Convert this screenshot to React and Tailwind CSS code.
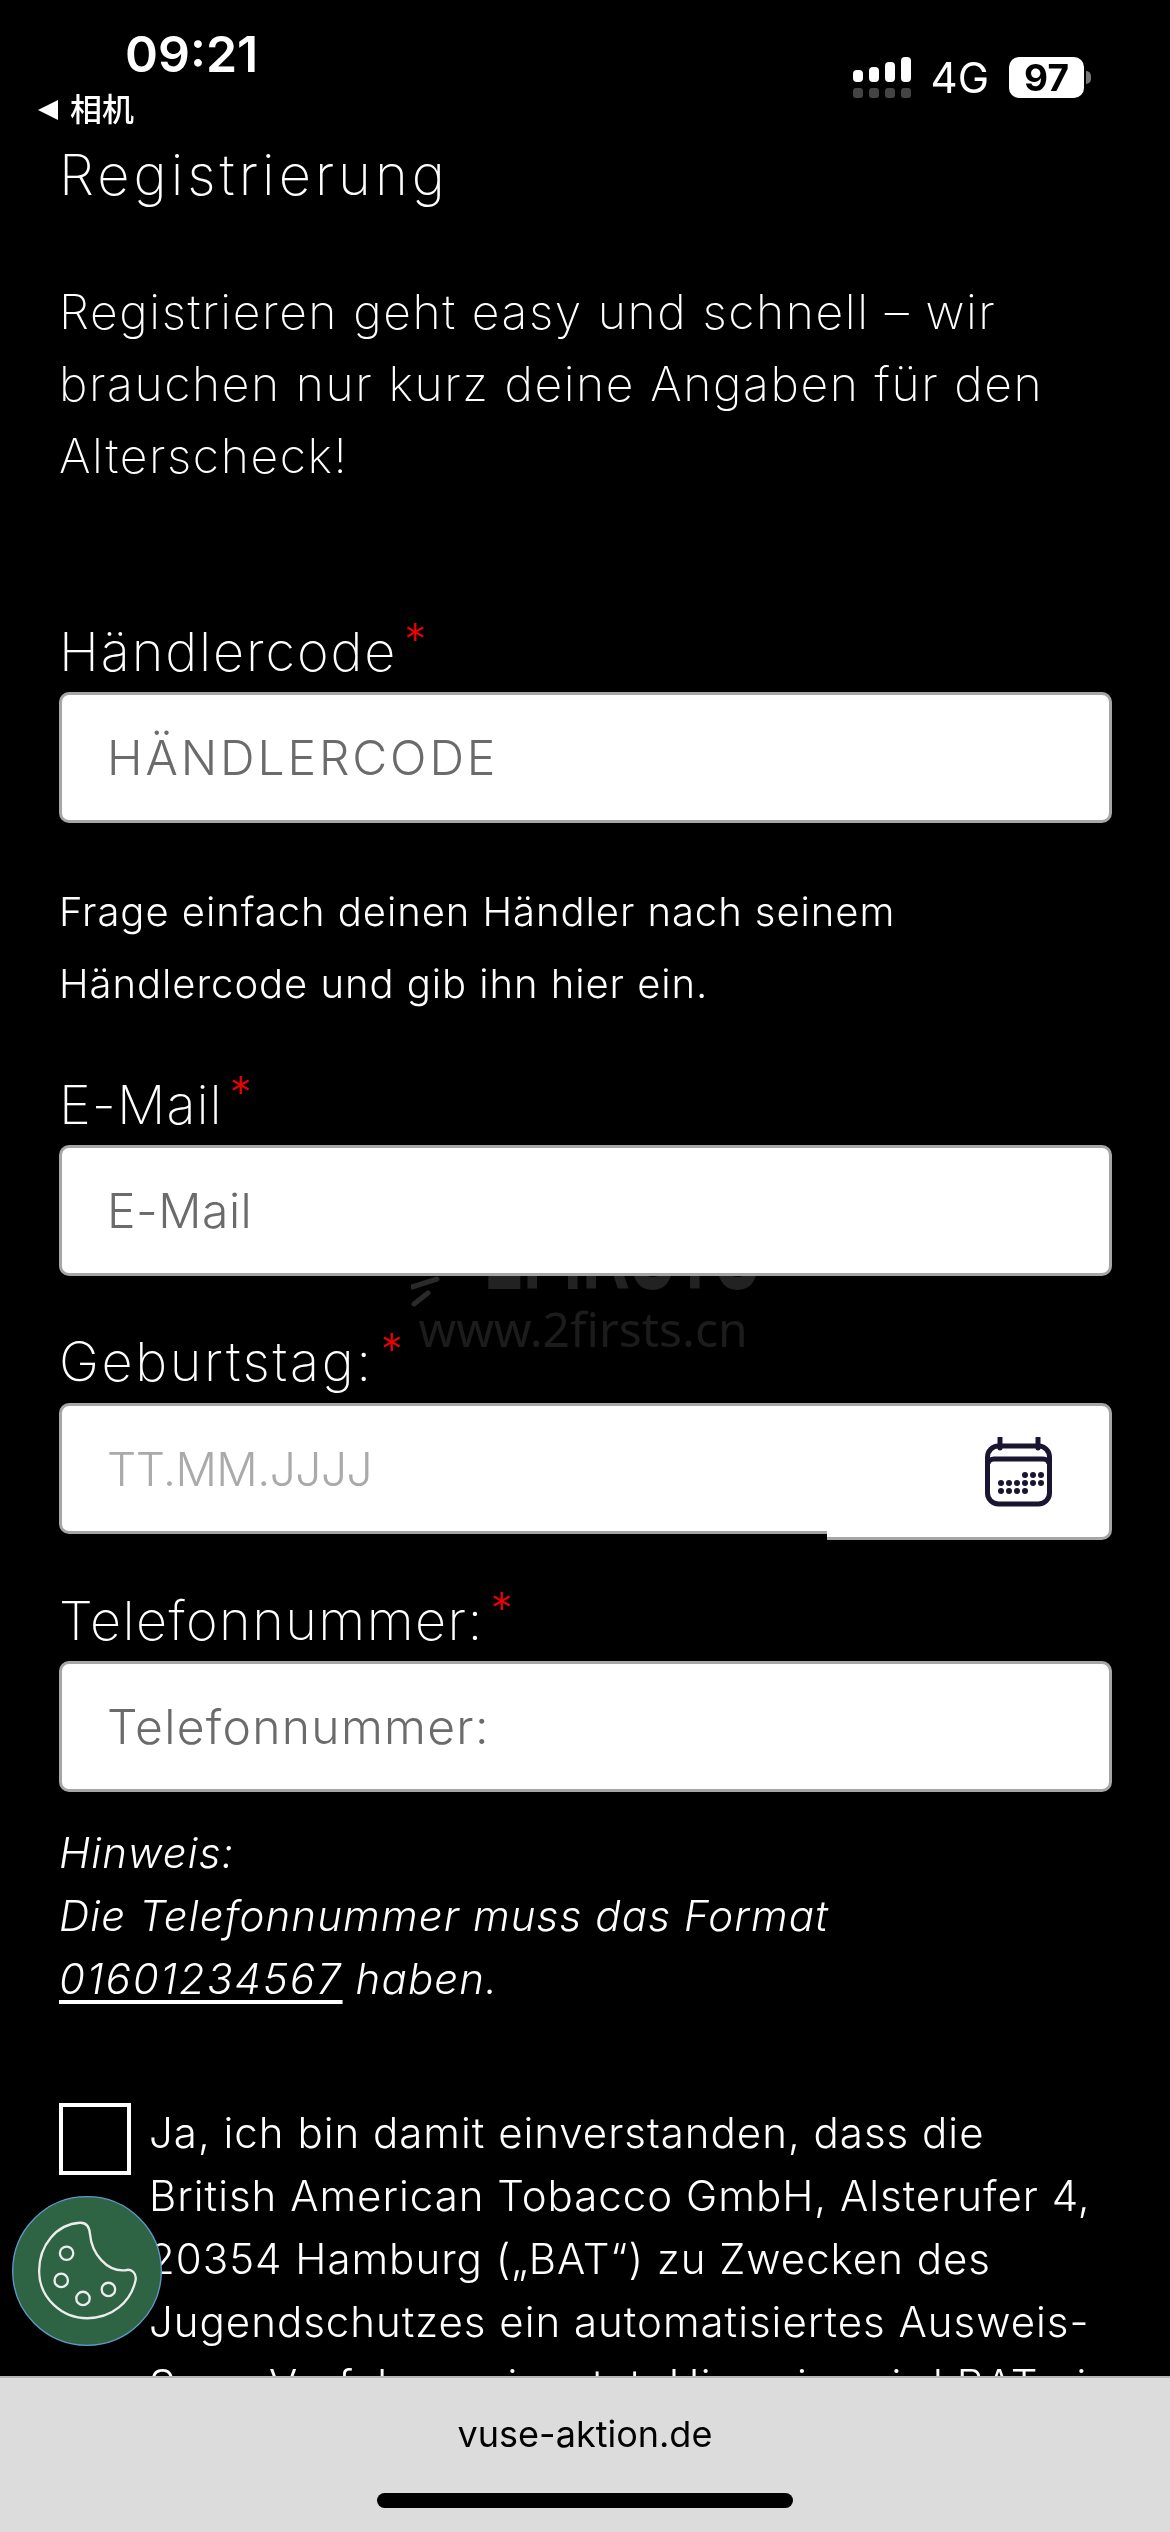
import React from "react";

const Star = () => <span className="absolute text-[#f00000] text-[44px] leading-none font-light left-full top-[-3px] ml-[7px]">*</span>;

function Label({ children, className = "" }) {
  return (
    <label className={`block h-[64px] text-[54px] leading-[64px] font-[250] text-white ${className}`}>
      <span className="relative inline-block">{children}<Star /></span>
    </label>
  );
}

function Field({ placeholder, className = "" }) {
  return (
    <input
      readOnly
      placeholder={placeholder}
      className={`block w-full h-[131px] bg-white border-[3px] border-[#a6a6a6] rounded-[10px] pl-[45px] pr-4 text-[48px] font-light outline-none placeholder:text-[#6b6b6b] ${className}`}
    />
  );
}

function Signal() {
  const heights = ["h-[12px]", "h-[15px]", "h-[20px]", "h-[25px]"];
  return (
    <div className="flex flex-col gap-[6px]">
      <div className="flex items-end gap-[6px] h-[25px]">
        {heights.map((h) => <span key={h} className={`w-[10px] ${h} rounded-[4px] bg-white`} />)}
      </div>
      <div className="flex gap-[6px]">
        {heights.map((h) => <span key={h} className="w-[10px] h-[10px] rounded-[3px] bg-[#444444]" />)}
      </div>
    </div>
  );
}

function CalendarIcon() {
  const dots = [
    [46, 32], [54, 32], [62, 32],
    [22, 40], [30, 40], [38, 40], [46, 40], [54, 40], [62, 40],
    [22, 48], [30, 48], [38, 48], [46, 48],
  ];
  return (
    <svg width="70" height="70" viewBox="0 0 70 70" fill="none" className="block">
      <path d="M16 1v10M54 1v10" stroke="#1a1530" strokeWidth="5" strokeLinecap="round" />
      <rect x="3.5" y="9" width="62" height="58" rx="11" stroke="#1a1530" strokeWidth="5" />
      <path d="M4 27c0-3 3-5 6-5h49c3 0 6 2 6 5" stroke="#1a1530" strokeWidth="5" />
      {dots.map(([x, y]) => <circle key={`${x}-${y}`} cx={x - 5} cy={y + 6} r="3" fill="#1a1530" />)}
    </svg>
  );
}

function CookieIcon() {
  return (
    <svg viewBox="37 348 448 448" className="block w-full h-full">
      <circle cx="261" cy="572" r="222" fill="#2e6344" stroke="#5b9bc9" strokeWidth="4" />
      <g fill="none" stroke="#ececec" strokeWidth="7">
        <path d="M240 428C170 432 118 495 118 572C118 652 185 713 262 713C335 713 392 665 406 600C410 580 395 563 375 570C320 575 275 520 270 462C268 440 258 427 240 428Z" />
        <circle cx="200" cy="519" r="20" />
        <circle cx="184" cy="600" r="20" />
        <circle cx="249" cy="654" r="20" />
        <circle cx="325" cy="627" r="20" />
      </g>
    </svg>
  );
}

export default function App() {
  return (
    <div
      className="relative w-[1170px] h-[2532px] overflow-hidden bg-black text-white flex flex-col"
      style={{ fontFamily: 'Inter, "Noto Sans CJK SC", sans-serif' }}
    >
      <main className="flex-1 min-h-0 overflow-hidden flex flex-col">
        <header className="h-[143px] shrink-0 flex justify-between pl-[38px] pr-[79px]">
          <div className="flex flex-col pt-[27px]">
            <span className="ml-[87px] text-[50px] leading-[54px] font-semibold">09:21</span>
            <span className="flex items-center gap-[12px] mt-[11px] text-[32px] leading-[36px] font-medium">
              <span className="w-0 h-0 border-y-[10px] border-y-transparent border-r-[20px] border-r-white" />
              相机
            </span>
          </div>
          <div className="flex items-start gap-[20px] pt-[57px]">
            <Signal />
            <span className="text-[42px] leading-[41px] font-normal">4G</span>
            <div className="flex items-center gap-[2px]">
              <span className="flex items-center justify-center w-[75px] h-[41px] rounded-[10px] bg-white text-black text-[37px] font-bold leading-none">97</span>
              <span className="w-[5px] h-[13px] rounded-r-[5px] bg-[#777777]" />
            </div>
          </div>
        </header>

        <div className="pl-[59px] pr-[58px] font-[275]">
          <h1 className="text-[56px] leading-[64px] font-[250] tracking-[4px]">Registrierung</h1>
          <p className="mt-[69px] text-[48px] leading-[72px] tracking-[1.6px] font-[250]">
            Registrieren geht easy und schnell – wir<br />
            brauchen nur kurz deine Angaben für den<br />
            Alterscheck!
          </p>

          <Label className="mt-[128px] mb-[8px] tracking-[1.9px]">Händlercode</Label>
          <Field placeholder="HÄNDLERCODE" className="tracking-[2.9px]" />

          <p className="mt-[53px] text-[40px] leading-[72px] tracking-[0.95px]">
            Frage einfach deinen Händler nach seinem<br />
            Händlercode und gib ihn hier ein.
          </p>

          <Label className="mt-[53px] mb-[8px] tracking-[1px]">E-Mail</Label>
          <Field placeholder="E-Mail" className="tracking-[0.5px]" />

          <Label className="mt-[54px] mb-[9px] tracking-[2.6px]">Geburtstag:</Label>
          <div className="flex items-start">
            <input
              readOnly
              placeholder="TT.MM.JJJJ"
              className="block w-[768px] h-[131px] bg-white border-[3px] border-r-0 border-[#a6a6a6] rounded-l-[10px] pl-[45px] text-[46px] font-light tracking-[-0.5px] outline-none placeholder:text-[#aaaaaa]"
            />
            <div className="flex-1 h-[137px] bg-white border-[3px] border-l-0 border-[#a6a6a6] rounded-r-[10px] flex items-center justify-end pr-[55px]">
              <CalendarIcon />
            </div>
          </div>

          <Label className="mt-[49px] mb-[8px] tracking-[1.4px]">Telefonnummer:</Label>
          <Field placeholder="Telefonnummer:" className="tracking-[1.3px]" />

          <p className="mt-[29px] text-[42px] leading-[63px] italic tracking-[1.15px]">
            Hinweis:<br />
            Die Telefonnummer muss das Format<br />
            <a className="underline decoration-[4px] underline-offset-[6px] tracking-[2px]">01601234567</a> haben.
          </p>

          <div className="mt-[91px] flex items-start gap-[18px]">
            <input type="checkbox" readOnly className="appearance-none shrink-0 mt-[2px] w-[72px] h-[72px] border-[4px] border-white bg-black" />
            <p className="text-[42px] leading-[63px] tracking-[1px] whitespace-nowrap">
              Ja, ich bin damit einverstanden, dass die<br />
              British American Tobacco GmbH, Alsterufer 4,<br />
              20354 Hamburg („BAT“) zu Zwecken des<br />
              Jugendschutzes ein automatisiertes Ausweis-<br />
              Scan-Verfahren einsetzt. Hinweis: wird BAT ein
            </p>
          </div>
        </div>
      </main>

      <footer className="shrink-0 h-[156px] bg-[#dcdcdc] border-t-[2px] border-[#b5b5b5] flex flex-col items-center text-black">
        <span className="mt-[35px] text-[36px] leading-[42px]">vuse-aktion.de</span>
        <span className="mt-[38px] w-[416px] h-[15px] rounded-full bg-black" />
      </footer>

      {/* 2FIRSTS watermark */}
      <div className="absolute left-[405px] top-[1190px] w-[370px] h-[160px] mix-blend-lighten pointer-events-none flex flex-col items-center">
        <svg width="50" height="40" viewBox="0 0 50 40" className="absolute left-[6px] top-[86px]">
          <path d="M1 11L26 3M3 28L17 17" stroke="#2a2a2a" strokeWidth="5" strokeLinecap="round" />
        </svg>
        <span className="ml-[66px] mt-[2px] text-[121px] leading-[110px] font-bold text-[#222222] scale-x-[0.55] whitespace-nowrap" style={{ fontFamily: '"Liberation Sans", sans-serif' }}>2FIRSTS</span>
        <span className="ml-[-14px] mt-[2px] text-[48px] leading-[50px] text-[#1c1c1c]" style={{ fontFamily: '"Noto Sans", sans-serif' }}>www.2firsts.cn</span>
      </div>

      <button className="absolute left-[12px] top-[2196px] w-[150px] h-[150px] rounded-full">
        <CookieIcon />
      </button>
    </div>
  );
}
